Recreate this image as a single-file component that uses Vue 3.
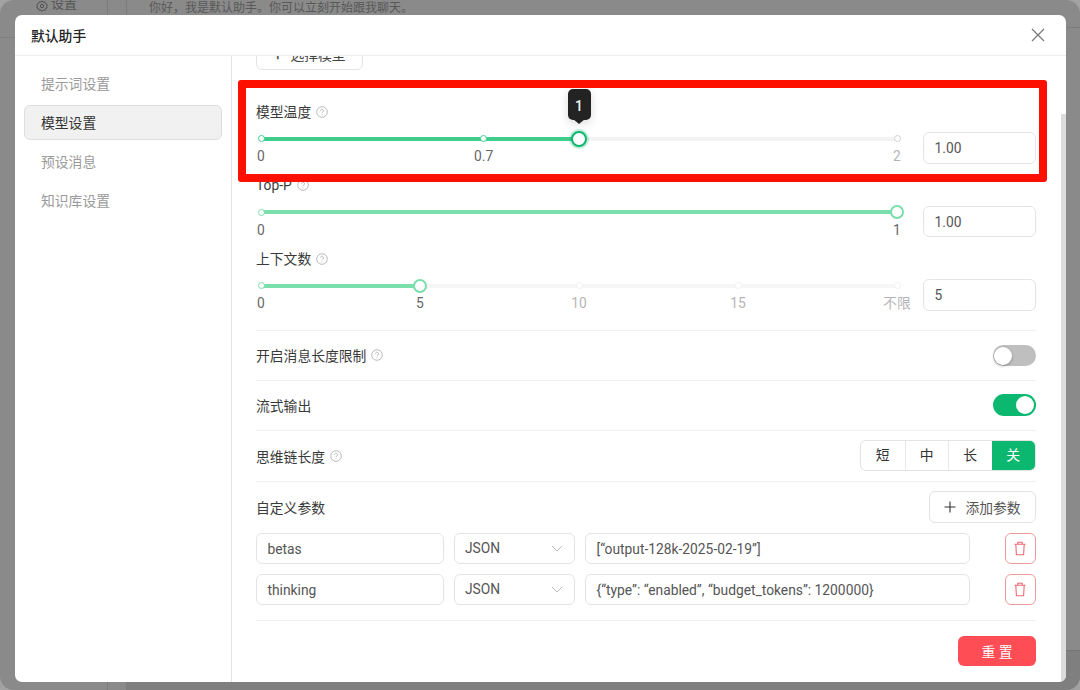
<script setup>
const sliders = [
  { label: '模型温度', help: true, value: '1.00', cls: 'strong', fill: 50, thumb: 50,
    marks: [{ l: 0, t: '0', on: true }, { l: 35, t: '0.7', on: true }, { l: 100, t: '2', on: false }] },
  { label: 'Top-P', help: true, value: '1.00', cls: 'soft', fill: 100, thumb: 100,
    marks: [{ l: 0, t: '0', on: true }, { l: 100, t: '1', on: true }] },
  { label: '上下文数', help: true, value: '5', cls: 'soft', fill: 25, thumb: 25,
    marks: [{ l: 0, t: '0', on: true }, { l: 25, t: '5', on: true }, { l: 50, t: '10', on: false }, { l: 75, t: '15', on: false }, { l: 100, t: '不限', on: false }] }
]
const menu = ['提示词设置', '模型设置', '预设消息', '知识库设置']
const params = [
  { name: 'betas', val: '[“output-128k-2025-02-19”]' },
  { name: 'thinking', val: '{“type”: “enabled”, “budget_tokens”: 1200000}' }
]
const seg = ['短', '中', '长', '关']
</script>

<template>
  <div class="screen">
    <div class="behind">
      <div class="behind-side">
        <div class="behind-cell">
          <svg width="12" height="12" viewBox="0 0 12 12" fill="none" stroke="#505050" stroke-width="1"><path d="M6 .8l1.2 1.4 1.8-.3.6 1.7 1.6.9-.6 1.7.6 1.7-1.6.6-.6 1.7-1.8-.2L6 11.2 4.8 10l-1.8.2-.6-1.7-1.6-.6.6-1.7-.6-1.7 1.6-.9L3 1.9l1.8.3z"/><circle cx="6" cy="6" r="1.7"/></svg>
          设置
        </div>
      </div>
      <div class="behind-gap"></div>
      <div class="behind-main">
        <div class="behind-msg">你好，我是默认助手。你可以立刻开始跟我聊天。</div>
        <div class="behind-foot"></div>
      </div>
    </div>

    <div class="modal">
      <header class="head">
        <span class="title">默认助手</span>
        <svg class="close" width="14" height="14" viewBox="0 0 14 14"><path d="M1 1l12 12M13 1L1 13" stroke="#777" stroke-width="1.2" fill="none"/></svg>
      </header>
      <div class="body">
        <nav class="side">
          <div v-for="(m, i) in menu" :key="m" class="item" :class="{ active: i === 1 }">{{ m }}</div>
        </nav>
        <main class="panel">
          <div class="scrollbar"></div>
          <button class="btn pick"><span class="plus">+</span>选择模型</button>

          <section v-for="s in sliders" :key="s.label" class="group" :class="s.cls">
            <div class="label">{{ s.label }}
              <svg class="help" width="12" height="12" viewBox="0 0 12 12"><circle cx="6" cy="6" r="5.3" fill="none" stroke="#aaa" stroke-width=".8"/><path d="M4.5 4.7a1.5 1.5 0 1 1 2.3 1.3c-.5.3-.8.6-.8 1.1" fill="none" stroke="#aaa" stroke-width=".8"/><circle cx="6" cy="8.7" r=".5" fill="#aaa"/></svg>
            </div>
            <div class="slider-row">
              <div class="slider">
                <div class="rail"></div>
                <div class="fill" :style="{ width: s.fill + '%' }"></div>
                <template v-for="m in s.marks" :key="m.t">
                  <span class="dot" :class="{ on: m.on }" :style="{ left: m.l + '%' }"></span>
                  <span class="mark" :class="{ on: m.on }" :style="{ left: m.l + '%' }">{{ m.t }}</span>
                </template>
                <span class="thumb" :style="{ left: s.thumb + '%' }"></span>
                <span v-if="s.cls === 'strong'" class="tip" :style="{ left: s.thumb + '%' }">1</span>
              </div>
              <div class="input num">{{ s.value }}</div>
            </div>
          </section>

          <div class="row first">
            <span class="label-inline">开启消息长度限制
              <svg class="help" width="12" height="12" viewBox="0 0 12 12"><circle cx="6" cy="6" r="5.3" fill="none" stroke="#aaa" stroke-width=".8"/><path d="M4.5 4.7a1.5 1.5 0 1 1 2.3 1.3c-.5.3-.8.6-.8 1.1" fill="none" stroke="#aaa" stroke-width=".8"/><circle cx="6" cy="8.7" r=".5" fill="#aaa"/></svg>
            </span>
            <span class="switch off"><i></i></span>
          </div>
          <div class="row second">
            <span class="label-inline">流式输出</span>
            <span class="switch on"><i></i></span>
          </div>
          <div class="row third">
            <span class="label-inline">思维链长度
              <svg class="help" width="12" height="12" viewBox="0 0 12 12"><circle cx="6" cy="6" r="5.3" fill="none" stroke="#aaa" stroke-width=".8"/><path d="M4.5 4.7a1.5 1.5 0 1 1 2.3 1.3c-.5.3-.8.6-.8 1.1" fill="none" stroke="#aaa" stroke-width=".8"/><circle cx="6" cy="8.7" r=".5" fill="#aaa"/></svg>
            </span>
            <div class="segments">
              <span v-for="(x, i) in seg" :key="x" class="seg" :class="{ sel: i === 3 }">{{ x }}</span>
            </div>
          </div>

          <div class="custom">
            <div class="custom-head">
              <span class="label-inline">自定义参数</span>
              <button class="btn add"><svg width="12" height="12" viewBox="0 0 12 12"><path d="M6 .5v11M.5 6h11" stroke="#333" stroke-width="1.1"/></svg>添加参数</button>
            </div>
            <div v-for="p in params" :key="p.name" class="param">
              <div class="input name">{{ p.name }}</div>
              <div class="input type">JSON
                <svg width="12" height="7" viewBox="0 0 12 7"><path d="M1 1l5 5 5-5" stroke="#bbb" stroke-width="1" fill="none"/></svg>
              </div>
              <div class="input val">{{ p.val }}</div>
              <button class="del">
                <svg width="14" height="15" viewBox="0 0 14 15" fill="none" stroke="#ec6a74" stroke-width="1.1"><path d="M1.5 3.2h11M4.8 3V1.2h4.4V3M2.8 3.4l.6 10.4h7.2l.6-10.4"/></svg>
              </button>
            </div>
          </div>

          <div class="foot">
            <button class="reset">重 置</button>
          </div>
        </main>
      </div>
    </div>

    <div class="annot"></div>
  </div>
</template>

<style>
html, body { margin: 0; background: #888; }
</style>

<style scoped>
.screen {
  position: relative;
  width: 1080px;
  height: 690px;
  overflow: hidden;
  background: #a2a2a2;
  font-family: Roboto, "Noto Sans CJK SC", sans-serif;
  font-size: 13.8px;
  color: #3a3a3a;
}
.behind {
  display: flex;
  height: 690px;
  background: #8a8a8a;
  border-radius: 14px;
  overflow: hidden;
  color: #555;
  font-size: 12px;
}
.behind-side { width: 108px; flex: none; box-sizing: border-box; border-right: 1px solid #7c7c7c; }
.behind-cell {
  height: 38px;
  box-sizing: border-box;
  border-bottom: 1px solid #7f7f7f;
  padding-left: 36px;
  display: flex;
  gap: 3px;
  align-items: flex-start;
  line-height: 8px;
  font-size: 13px;
}
.behind-gap { width: 19px; flex: none; box-sizing: border-box; border-right: 1px solid #7c7c7c; }
.behind-main { flex: 1; display: flex; flex-direction: column; }
.behind-msg { height: 28px; box-sizing: border-box; border-bottom: 1px solid #7c7c7c; padding-left: 22px; line-height: 17px; color: #585858; }
.behind-foot { margin-top: auto; height: 40px; box-sizing: border-box; border-top: 1px solid #757575; background: #7f7f7f; }

.modal {
  position: absolute;
  left: 15px;
  top: 15px;
  width: 1051px;
  height: 667px;
  background: #fff;
  border-radius: 7px;
  overflow: hidden;
  display: flex;
  flex-direction: column;
}
.head {
  height: 41px;
  flex: none;
  box-sizing: border-box;
  border-bottom: 1px solid #eee;
  padding: 0 21px 0 16px;
  display: flex;
  align-items: center;
  justify-content: space-between;
}
.title { font-weight: 500; color: #222; font-size: 13.8px; }
.body { flex: 1; display: flex; min-height: 0; }
.side {
  width: 217px;
  flex: none;
  box-sizing: border-box;
  border-right: 1px solid #e3e3e3;
  padding: 10px 9px;
  display: flex;
  flex-direction: column;
  gap: 4px;
}
.item {
  height: 35px;
  box-sizing: border-box;
  line-height: 35px;
  padding-left: 16px;
  color: #9a9a9a;
  border: 1px solid transparent;
  border-radius: 6px;
}
.item.active { background: #f1f1f1; border-color: #dedede; color: #333; }

.panel {
  flex: 1;
  position: relative;
  overflow: hidden;
  padding: 0 30px 0 24px;
}
.scrollbar {
  position: absolute;
  right: 0;
  top: 58px;
  bottom: 0;
  width: 5px;
  background: #dcdcdc;
}
.btn {
  font: inherit;
  color: #444;
  background: #fff;
  border: 1px solid #e3e3e3;
  border-radius: 6px;
  box-sizing: border-box;
  display: flex;
  align-items: center;
  justify-content: center;
}
.pick {
  width: 107px;
  height: 32px;
  margin-top: -18px;
  margin-bottom: 27.5px;
  gap: 8px;
}
.plus { font-size: 16px; }

.group { height: 73.5px; }
.label { height: 28px; line-height: 28px; margin-bottom: 6.5px; display: flex; align-items: center; gap: 5px; }
.label-inline { display: flex; align-items: center; gap: 5px; }
.help { flex: none; }
.slider-row { display: flex; gap: 26px; }
.slider { position: relative; flex: 1; height: 31.5px; margin-left: 5px; }
.rail, .fill { position: absolute; left: 0; top: 4.5px; height: 4px; border-radius: 2px; }
.rail { right: 0; background: #f3f3f3; }
.soft .rail { background: #f6f6f6; }
.strong .fill { background: #3fcd8b; }
.soft .fill { background: #7adfac; }
.dot {
  position: absolute;
  top: 3px;
  width: 7px;
  height: 7px;
  box-sizing: border-box;
  margin-left: -3.5px;
  background: #fff;
  border-radius: 50%;
  border: 1.5px solid #e4e4e4;
}
.strong .dot.on { border-color: #3fcd8b; }
.soft .dot.on { border-color: #7adfac; }
.strong .dot { border-color: #cfcfcf; }
.soft .dot { border-color: #f0f0f0; }
.mark {
  position: absolute;
  top: 14px;
  transform: translateX(-50%);
  line-height: 20px;
  font-size: 13.8px;
  color: #b5b5b5;
  white-space: nowrap;
}
.mark.on { color: #666; }
.thumb {
  position: absolute;
  top: -.5px;
  width: 14px;
  height: 14px;
  margin-left: -7px;
  box-sizing: border-box;
  background: #fff;
  border-radius: 50%;
  border: 2px solid #7adfac;
}
.strong .thumb {
  top: -1.5px;
  width: 16px;
  height: 16px;
  margin-left: -8px;
  border: 2.5px solid #10b56f;
  box-shadow: 0 0 0 2px rgba(16, 185, 111, .25);
}
.tip {
  position: absolute;
  top: -43px;
  width: 23px;
  height: 31px;
  margin-left: -11.5px;
  background: #232323;
  color: #f2f2f2;
  border-radius: 5px;
  text-align: center;
  line-height: 34px;
  font-size: 13.8px;
  font-weight: 500;
  box-shadow: 0 3px 10px rgba(0, 0, 0, .14);
}
.tip::after {
  content: "";
  position: absolute;
  left: 50%;
  bottom: -4px;
  margin-left: -6px;
  border-left: 6px solid transparent;
  border-right: 6px solid transparent;
  border-top: 5px solid #232323;
}
.input {
  box-sizing: border-box;
  height: 31.5px;
  line-height: 30px;
  border: 1px solid #e4e4e4;
  border-radius: 6px;
  padding: 0 11px 0 10.5px;
  color: #555;
  background: #fff;
  white-space: nowrap;
}
.num { width: 113px; flex: none; }

.row {
  height: 50.5px;
  box-sizing: border-box;
  border-top: 1px solid #f0f0f0;
  display: flex;
  align-items: center;
  justify-content: space-between;
}
.row.first { margin-top: 11.5px; }
.row.second { height: 49.5px; }
.row.third { height: 51px; }
.switch {
  position: relative;
  width: 43px;
  height: 21px;
  border-radius: 11px;
  background: #bfbfbf;
  display: block;
}
.switch i {
  position: absolute;
  top: 2px;
  left: 1px;
  width: 18px;
  height: 18px;
  border-radius: 50%;
  background: #fff;
  box-shadow: 0 1px 3px rgba(0, 0, 0, .3);
}
.switch.on { background: #0cb86f; height: 22px; }
.switch.on i { left: 23px; top: 2px; box-shadow: none; }

.segments { display: flex; border: 1px solid #e3e3e3; border-radius: 6px; overflow: hidden; height: 31.5px; box-sizing: border-box; }
.seg { width: 43.5px; box-sizing: border-box; text-align: center; line-height: 29.5px; border-left: 1px solid #e8e8e8; color: #333; }
.seg:first-child { border-left: 0; }
.seg.sel { background: #0cb86f; color: #fff; border-left: 0; }

.custom { border-top: 1px solid #f0f0f0; padding-top: 9.5px; padding-bottom: 15px; border-bottom: 1px solid #f0f0f0; }
.custom-head { display: flex; align-items: center; justify-content: space-between; margin-bottom: 10px; }
.add { width: 107px; height: 31.5px; gap: 9px; color: #555; }
.param { display: flex; gap: 10px; margin-bottom: 9.5px; height: 31.5px; }
.param:last-child { margin-bottom: 0; }
.name { width: 187.5px; }
.type { width: 121px; display: flex; align-items: center; justify-content: space-between; }
.val { width: 385px; margin-left: .5px; }
.del {
  margin-left: 24.5px;
  width: 31px;
  height: 31.5px;
  box-sizing: border-box;
  background: #fff;
  border: 1px solid #f09aa0;
  border-radius: 6px;
  display: flex;
  align-items: center;
  justify-content: center;
  padding: 0;
}
.foot { display: flex; justify-content: flex-end; padding-top: 14.5px; }
.reset {
  width: 78px;
  height: 30.5px;
  border: 0;
  border-radius: 6px;
  background: #ff4d56;
  color: #fff;
  font: inherit;
}

.annot {
  position: absolute;
  left: 238px;
  top: 80px;
  width: 809px;
  height: 102px;
  box-sizing: border-box;
  border: 8px solid #fe1000;
  border-radius: 3px;
  pointer-events: none;
}
</style>
